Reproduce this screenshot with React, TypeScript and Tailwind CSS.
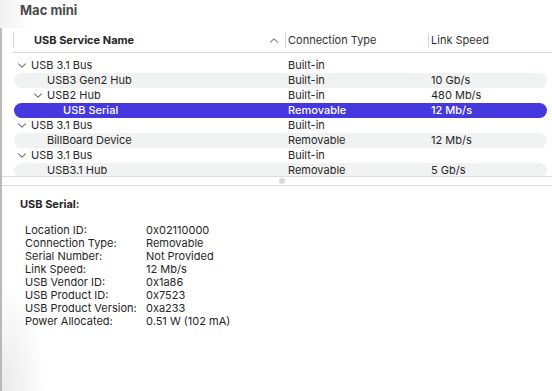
import React from "react";

type Row = {
  name: string;
  depth: 0 | 1 | 2;
  expandable?: boolean;
  conn: string;
  speed?: string;
  selected?: boolean;
};

const rows: Row[] = [
  { name: "USB 3.1 Bus", depth: 0, expandable: true, conn: "Built-in" },
  { name: "USB3 Gen2 Hub", depth: 1, conn: "Built-in", speed: "10 Gb/s" },
  { name: "USB2 Hub", depth: 1, expandable: true, conn: "Built-in", speed: "480 Mb/s" },
  { name: "USB Serial", depth: 2, conn: "Removable", speed: "12 Mb/s", selected: true },
  { name: "USB 3.1 Bus", depth: 0, expandable: true, conn: "Built-in" },
  { name: "BillBoard Device", depth: 1, conn: "Removable", speed: "12 Mb/s" },
  { name: "USB 3.1 Bus", depth: 0, expandable: true, conn: "Built-in" },
  { name: "USB3.1 Hub", depth: 1, conn: "Removable", speed: "5 Gb/s" },
];

const details = [
  ["Location ID:", "0x02110000"],
  ["Connection Type:", "Removable"],
  ["Serial Number:", "Not Provided"],
  ["Link Speed:", "12 Mb/s"],
  ["USB Vendor ID:", "0x1a86"],
  ["USB Product ID:", "0x7523"],
  ["USB Product Version:", "0xa233"],
  ["Power Allocated:", "0.51 W (102 mA)"],
];

const indent = ["pl-[4px]", "pl-[20px]", "pl-[36px]"];

const Chevron = ({ color }: { color: string }) => (
  <svg width="8" height="5" viewBox="0 0 8 5" fill="none">
    <polyline points="0.5,0.8 4,4.2 7.5,0.8" stroke={color} strokeWidth="1.1" strokeLinecap="round" strokeLinejoin="round" />
  </svg>
);

export default function App() {
  return (
    <div className="w-[552px] h-[391px] bg-white overflow-hidden flex flex-col text-[11px] text-[#262626] font-['Inter','Liberation_Sans',sans-serif]">
      {/* title */}
      <div className="h-[28px] shrink-0 pl-[20px] pt-[2px] bg-[linear-gradient(to_right,#f1f1f1,#ffffff_30px)]">
        <span className="text-[13px] font-bold text-[#4b4b4b] leading-[17px]">Mac mini</span>
      </div>

      <div className="flex-1 flex flex-col border-l-[2px] border-[#b9b9b9]">
        {/* table header */}
        <div className="h-[25px] shrink-0 flex items-center border-b border-[#dcdcdc] ml-[11px]">
          <div className="w-px h-[14px] bg-[#d4d4d4]" />
          <div className="w-[271px] flex items-center pl-[20px] pr-[7px]">
            <span className="font-bold">USB Service Name</span>
            <svg className="ml-auto" width="8" height="5" viewBox="0 0 8 5" fill="none">
              <polyline points="0.5,4.2 4,0.8 7.5,4.2" stroke="#8a8a8a" strokeWidth="1.1" strokeLinecap="round" strokeLinejoin="round" />
            </svg>
          </div>
          <div className="w-px h-[15px] bg-[#d4d4d4]" />
          <div className="w-[142px] pl-[2px] text-[#333]">Connection Type</div>
          <div className="w-px h-[15px] bg-[#d4d4d4]" />
          <div className="pl-[2px] text-[#333]">Link Speed</div>
        </div>

        {/* rows */}
        <div className="h-[123px] shrink-0 overflow-hidden pt-[5px] pl-[12px] pr-[5px]">
          {rows.map((r, i) => (
            <div
              key={i}
              className={
                "h-[15px] rounded-full flex items-center leading-[15px] " +
                (r.selected ? "bg-[#4638df] text-white font-medium" : i % 2 === 1 ? "bg-[#f1f2f2]" : "")
              }
            >
              <div className={"w-[274px] flex items-center " + indent[r.depth]}>
                <div className="w-[13px] flex items-center">
                  {r.expandable && <Chevron color={r.selected ? "#fff" : "#767676"} />}
                </div>
                <span>{r.name}</span>
              </div>
              <div className="w-[143px]">{r.conn}</div>
              <div>{r.speed}</div>
            </div>
          ))}
        </div>

        {/* splitter */}
        <div className="h-[10px] shrink-0 border-y border-[#dcdcdc] flex items-center justify-center">
          <div className="w-[6px] h-[6px] rounded-full bg-[#d9d9d9] ml-[10px]" />
        </div>

        {/* detail */}
        <div className="flex-1 pl-[18px] pt-[11px] bg-[radial-gradient(ellipse_45px_110px_at_0%_100%,#e9e9e9,#ffffff)]">
          <div className="font-bold leading-[14px]">USB Serial:</div>
          <div className="mt-[13px] pl-[5px] flex flex-col">
            {details.map(([k, v]) => (
              <div key={k} className="flex leading-[13px]">
                <span className="w-[121px] shrink-0">{k}</span>
                <span>{v}</span>
              </div>
            ))}
          </div>
        </div>
      </div>
    </div>
  );
}
